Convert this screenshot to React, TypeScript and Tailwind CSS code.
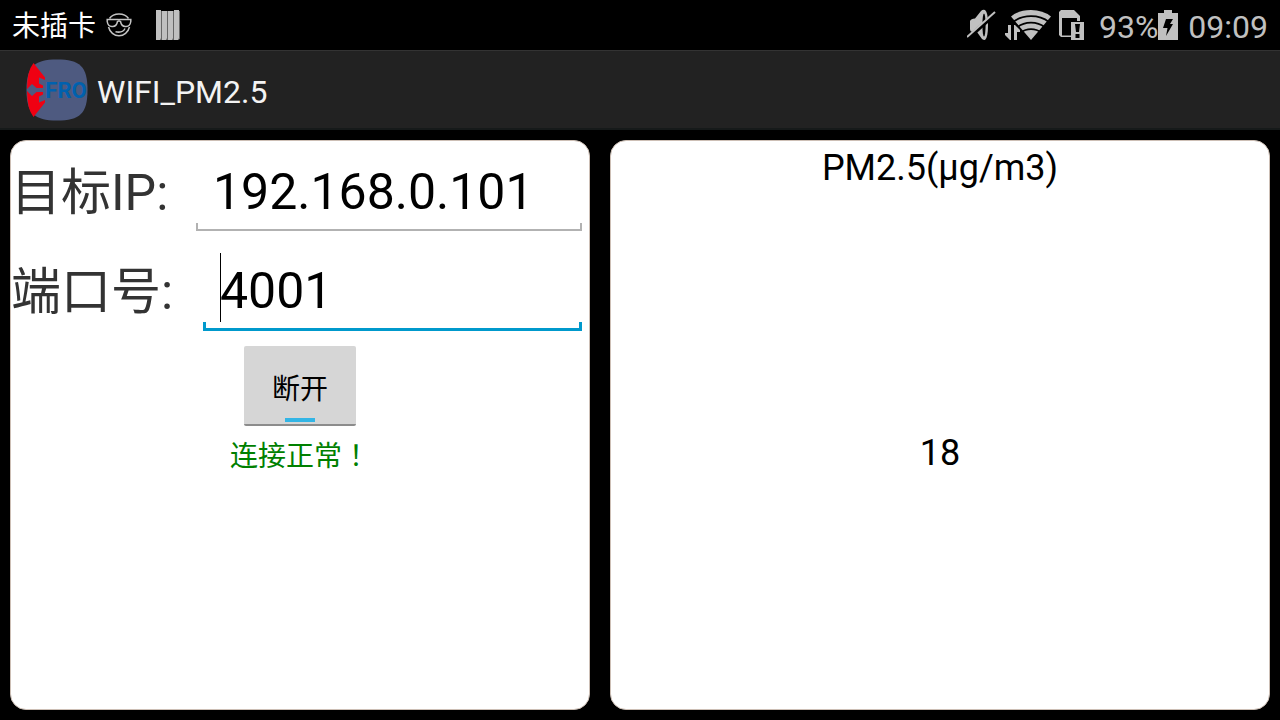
import React, { useState } from "react";

function FaceIcon() {
  return (
    <svg width="26" height="26" viewBox="0 0 26 26" fill="none" stroke="#c4c4c4" strokeWidth="1.5" aria-hidden="true">
      <path d="M3.500 6.500C5.500 3.600 9 2 13 2s7.500 1.600 9.500 4.500M2.500 15c1.300 5.200 5.700 8.800 10.500 8.800S22.200 20.200 23.500 15" />
      <path d="M1.200 7.500H12.400Q13 8 13.600 7.500H24.800v2q-.8 5-4.600 5h-1q-3.700 0-4.700-5-1.500-1.200-3 0-1 5-4.700 5h-1q-3.800 0-4.600-5z" />
      <path d="M9.500 19.800c4.200.8 8 0 9.500-3.300" />
    </svg>
  );
}

function BarsIcon() {
  return (
    <svg width="24" height="30" viewBox="0 0 24 30" aria-hidden="true">
      <path fill="#666" d="M1 1h23v28l-2 1H1z" />
      <path fill="#c0c0c0" d="M0 0h5v28l-1 2H0zM6 1h5v27l-1 2H6zM12 1h5v27l-1 2h-4zM18 0h5v28l-1 2h-4z" />
    </svg>
  );
}

function MuteIcon() {
  return (
    <svg width="30" height="32" viewBox="0 0 30 32" aria-hidden="true">
      <path fill="#c0c0c0" d="M3 12q1-2.500 5-2.500L14 2q2-2 4-1 3 2 3 15t-3 15q-2 0-3-1l-5-7H6q-3 0-3-3z" />
      <ellipse cx="17" cy="16" rx="1.600" ry="11.500" fill="#000" />
      <path stroke="#000" strokeWidth="4" d="M0 30 28 5" />
      <path stroke="#c0c0c0" strokeWidth="2" d="M0 28 28 3" />
    </svg>
  );
}

function WifiIcon() {
  return (
    <svg width="46" height="32" viewBox="0 0 46 32" aria-hidden="true">
      <path fill="#c0c0c0" d="M6 7.500Q14 1 26 1t20 6.500L26 31z" />
      <path fill="none" stroke="#000" strokeWidth="1.700" d="M8 13Q15.500 7.200 26 7.200T44 13M12 18.500q6-4.800 14-4.800t14 4.800M16 23.700q4-3.500 10-3.500t10 3.500" />
      <path fill="#000" d="M0 15h12l4 7v10H0z" />
      <path fill="#c0c0c0" d="M3 16h3v15H5l-5-5v-2h3zM9 31V16h1l5 5v2h-3v8z" />
    </svg>
  );
}

function SimAlertIcon() {
  return (
    <svg width="26" height="30" viewBox="0 0 26 30" aria-hidden="true">
      <path fill="#c0c0c0" d="M2 0h13l6 6v21H2l-2-2V2z" />
      <path fill="#000" d="M3 8h15v3h3v17h-9v-2.500H3z" />
      <path fill="#c0c0c0" d="M12 12h13v18H12z" />
      <path fill="#000" d="M16 14h5l-1 8h-3zM16.500 24h4v4h-4z" />
    </svg>
  );
}

function BatteryIcon() {
  return (
    <svg width="20" height="30" viewBox="0 0 20 30" aria-hidden="true">
      <path fill="#c0c0c0" d="M6 0h8v3h6v27H0V3h6z" />
      <path fill="#000" d="M8 9h7l-3 5h3L8 26l1.500-8H5z" />
    </svg>
  );
}

function Logo() {
  return (
    <svg width="62" height="62" viewBox="0 0 62 62" aria-hidden="true">
      <path fill="#4e5a80" d="M31 .5c23 0 30.500 7 30.500 30.500S54 61.500 31 61.500.5 54 .5 31 8 .5 31 .5z" />
      <path
        fill="#ef0012"
        d="M7.500 4 19 18.500V21l-6-2.500v6l4 2V29h-6.500L6 25l-5 5Q1 12 7.500 4zM7.500 58 19 43.500V41l-6 2.500v-6l4-2V33h-6.500L6 37l-5-5Q1 50 7.500 58z"
      />
      <text x="40" y="39" textAnchor="middle" fill="#0061ae" className="font-[Roboto,sans-serif] text-[22px] font-bold">
        FRO
      </text>
    </svg>
  );
}

export default function App() {
  const [ip, setIp] = useState("192.168.0.101");
  const [port, setPort] = useState("4001");

  return (
    <div className="flex min-h-screen flex-col bg-black font-[Roboto,'Noto_Sans_CJK_SC',sans-serif]">
      <div className="flex h-[50px] items-center justify-between px-3 text-[#c0c0c0]">
        <div className="flex items-center">
          <span className="pt-1 text-[28px] leading-8 text-white">未插卡</span>
          <span className="ml-2.5">
            <FaceIcon />
          </span>
          <span className="ml-6">
            <BarsIcon />
          </span>
        </div>
        <div className="flex items-center text-[32px] leading-8">
          <MuteIcon />
          <span className="ml-2">
            <WifiIcon />
          </span>
          <span className="ml-2">
            <SimAlertIcon />
          </span>
          <span className="ml-3.5 pt-1">93%</span>
          <BatteryIcon />
          <span className="ml-2.5 pt-1">09:09</span>
        </div>
      </div>

      <header className="flex h-20 items-center gap-[9px] border-t border-b-2 border-t-[#333] border-b-[#161a1a] bg-[#222] px-[26px]">
        <Logo />
        <h1 className="pt-1 text-[32px] leading-10 text-[#f3f3f3]">WIFI_PM2.5</h1>
      </header>

      <main className="grid flex-1 grid-cols-[29fr_33fr] gap-5 p-2.5">
        <section className="flex flex-col items-center rounded-2xl border border-[#cdbfb5] bg-white pt-[18px] text-black">
          <div className="flex w-full pr-[7px]">
            <label htmlFor="ip" className="w-[185px] shrink-0 pt-0.5 text-[50px] leading-16 text-[#333]">
              目标IP:
            </label>
            <div className="min-w-0 flex-1">
              <input
                id="ip"
                value={ip}
                onChange={(e) => setIp(e.target.value)}
                className="block h-16 w-full px-[17px] pt-0.5 text-[50px] leading-[62px] outline-none"
              />
              <div className="h-2 border-2 border-t-0 border-[#b2b2b2]" />
            </div>
          </div>
          <div className="mt-[27px] flex w-full pr-[7px]">
            <label htmlFor="port" className="w-[192px] shrink-0 pt-0.5 text-[50px] leading-16 text-[#333]">
              端口号:
            </label>
            <div className="relative min-w-0 flex-1">
              <input
                id="port"
                value={port}
                onChange={(e) => setPort(e.target.value)}
                className="block h-16 w-full px-[17px] pt-0.5 text-[50px] leading-[62px] outline-none"
              />
              <div className="h-[9px] border-[3px] border-t-0 border-[#0099cc]" />
              <span className="absolute -top-[5px] left-[17px] h-[69px] w-px bg-black" />
            </div>
          </div>
          <button
            type="button"
            className="mt-[15px] flex h-20 w-28 flex-col items-center justify-end rounded-xs border-b-2 border-[#8c8c8c] bg-[#d6d6d6] pb-0.5 text-[28px] leading-10"
          >
            <span className="mb-2">断开</span>
            <span className="h-1 w-[30px] bg-[#33b5e5]" />
          </button>
          <p className="mt-2 text-[28px] leading-10 text-[#008000]">
            连接正常<span className="font-['Noto_Sans_CJK_TC',sans-serif]">！</span>
          </p>
        </section>

        <section className="flex flex-col items-center rounded-2xl border border-[#cdbfb5] bg-white pt-1.5 text-[36px] leading-[42px] text-black">
          <h2>PM2.5(μg/m3)</h2>
          <output className="flex flex-1 items-center pt-2">18</output>
        </section>
      </main>
    </div>
  );
}
